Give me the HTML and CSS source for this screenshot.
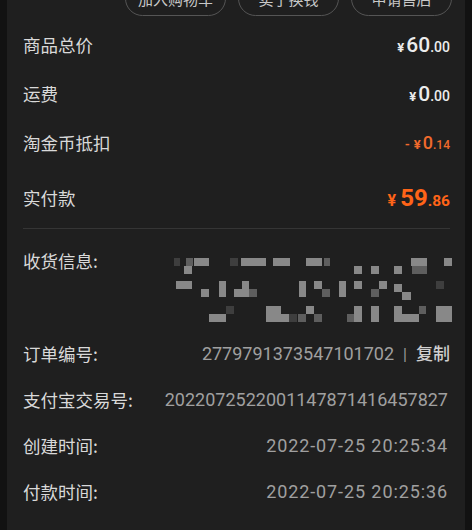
FILE: index.html
```html
<!DOCTYPE html>
<html lang="zh-CN">
<head>
<meta charset="utf-8">
<title>订单详情</title>
<link rel="stylesheet" href="styles.css">
</head>
<body>
<div class="frame">
  <div class="card">
    <div class="actions">
      <button class="pill">加入购物车</button>
      <button class="pill">卖了换钱</button>
      <button class="pill">申请售后</button>
    </div>

    <div class="row">
      <span class="label">商品总价</span>
      <span class="price"><span class="cur">¥</span><span class="int">60</span><span class="dec">.00</span></span>
    </div>
    <div class="row">
      <span class="label">运费</span>
      <span class="price"><span class="cur">¥</span><span class="int">0</span><span class="dec">.00</span></span>
    </div>
    <div class="row">
      <span class="label">淘金币抵扣</span>
      <span class="price discount"><span class="minus">-</span><span class="cur">¥</span><span class="int">0</span><span class="dec">.14</span></span>
    </div>
    <div class="row row-total">
      <span class="label">实付款</span>
      <span class="price total"><span class="cur">¥</span><span class="int">59</span><span class="dec">.86</span></span>
    </div>

    <div class="divider"></div>

    <div class="address">
      <span class="label">收货信息:</span>
      <svg class="mosaic" width="280" height="72" viewBox="0 0 280 72" aria-hidden="true">
        <g fill="#888888">
          <rect x="20" y="4" width="15" height="8"/>
          <rect x="67" y="4" width="25" height="8"/>
          <rect x="99" y="4" width="17" height="8"/>
          <rect x="132" y="4" width="16" height="8"/>
          <rect x="237" y="4" width="16" height="8"/>
          <rect x="270" y="4" width="8" height="8"/>
          <rect x="10" y="12" width="8" height="8"/>
          <rect x="180" y="12" width="8" height="8"/>
          <rect x="197" y="12" width="8" height="8"/>
          <rect x="220" y="12" width="8" height="8"/>
          <rect x="2" y="27" width="16" height="8"/>
          <rect x="45" y="27" width="7" height="16"/>
          <rect x="68" y="27" width="7" height="8"/>
          <rect x="125" y="27" width="7" height="16"/>
          <rect x="140" y="27" width="8" height="8"/>
          <rect x="165" y="27" width="7" height="16"/>
          <rect x="180" y="27" width="8" height="8"/>
          <rect x="205" y="27" width="8" height="8"/>
          <rect x="220" y="30" width="8" height="8"/>
          <rect x="27" y="35" width="8" height="8"/>
          <rect x="60" y="35" width="15" height="8"/>
          <rect x="228" y="38" width="9" height="8"/>
          <rect x="92" y="52" width="15" height="8"/>
          <rect x="92" y="60" width="23" height="8"/>
          <rect x="132" y="52" width="8" height="8"/>
          <rect x="180" y="52" width="8" height="16"/>
          <rect x="197" y="52" width="8" height="16"/>
          <rect x="220" y="52" width="8" height="16"/>
          <rect x="228" y="60" width="17" height="8"/>
          <rect x="262" y="52" width="16" height="16"/>
          <rect x="35" y="60" width="17" height="8"/>
        </g>
        <g fill="#5e5e5e">
          <rect x="12" y="4" width="7" height="8"/>
          <rect x="150" y="4" width="6" height="8"/>
          <rect x="238" y="12" width="15" height="8"/>
          <rect x="197" y="35" width="8" height="8"/>
          <rect x="148" y="35" width="8" height="8"/>
          <rect x="124" y="60" width="8" height="8"/>
          <rect x="140" y="60" width="8" height="8"/>
          <rect x="173" y="60" width="7" height="8"/>
          <rect x="245" y="52" width="7" height="8"/>
          <rect x="75" y="35" width="8" height="8"/>
        </g>
        <g fill="#3e3e3e">
          <rect x="0" y="4" width="6" height="8"/>
          <rect x="56" y="4" width="8" height="8"/>
          <rect x="262" y="27" width="8" height="8"/>
          <rect x="115" y="60" width="8" height="8"/>
          <rect x="52" y="52" width="8" height="8"/>
        </g>
      </svg>
    </div>

    <div class="info">
      <span class="label">订单编号:</span>
      <span class="value">2779791373547101702<span class="sep">|</span><span class="copy">复制</span></span>
    </div>
    <div class="info">
      <span class="label">支付宝交易号:</span>
      <span class="value">2022072522001147871416457827</span>
    </div>
    <div class="info">
      <span class="label">创建时间:</span>
      <span class="value time">2022-07-25 20:25:34</span>
    </div>
    <div class="info">
      <span class="label">付款时间:</span>
      <span class="value time">2022-07-25 20:25:36</span>
    </div>
    <div class="info">
      <span class="label">发货时间:</span>
      <span class="value time">2022-07-26 07:40:28</span>
    </div>
  </div>
</div>
</body>
</html>
```

FILE: styles.css
```css
* { box-sizing: border-box; }

html, body {
  margin: 0;
  padding: 0;
  background: #121212;
  height: 100%;
  overflow: hidden;
}

body {
  font-family: "Noto Sans CJK SC", "Noto Sans", sans-serif;
}

.frame {
  padding: 0 7px;
  height: 100%;
}

.card {
  background: #1f1f1f;
  height: 100%;
  padding: 0 15px 0 16px;
  display: flex;
  flex-direction: column;
}

.actions {
  height: 16px;
  flex: none;
  display: flex;
  justify-content: flex-end;
  align-items: flex-end;
  gap: 12px;
  margin-right: -2px;
  overflow: hidden;
}

.pill {
  flex: none;
  width: 101px;
  height: 35px;
  border: 1px solid #555555;
  border-radius: 18px;
  background: transparent;
  color: #c8c8c8;
  font-family: "Noto Sans CJK SC", sans-serif;
  font-size: 15px;
  line-height: 33px;
  padding: 0;
}

.row {
  flex: none;
  height: 49px;
  display: flex;
  align-items: center;
  justify-content: space-between;
}

.actions + .row { margin-top: 4.5px; }

.row-total { height: 60px; }

.label {
  color: #d9d9d9;
  font-size: 17.5px;
  font-weight: 400;
  line-height: 24px;
}

.price {
  font-family: "Roboto", "Liberation Sans", sans-serif;
  color: #ececec;
  font-weight: 500;
  display: flex;
  align-items: baseline;
  line-height: 1;
}

.price .cur {
  font-size: 13px;
  font-weight: 700;
  margin-right: 2px;
}

.price .int {
  font-size: 21px;
}

.price .dec {
  font-size: 14px;
}

.discount { color: #f06a2c; }
.discount .minus { font-size: 13px; margin-right: 4px; font-weight: 700; }
.discount .int { font-size: 18px; }
.discount .dec { font-size: 12px; }

.total { color: #ff6418; }
.total .cur { font-size: 16px; margin-right: 4px; }
.total .int { font-size: 24px; font-weight: 700; }
.total .dec { font-size: 15.5px; font-weight: 700; }

.divider {
  flex: none;
  height: 1px;
  background: #353535;
}

.address {
  flex: none;
  height: 102px;
  display: flex;
  justify-content: space-between;
  align-items: flex-start;
  padding-top: 20px;
}

.mosaic {
  display: block;
  margin-top: 5px;
  margin-right: -4px;
  filter: blur(0.7px);
}

.info {
  flex: none;
  height: 46px;
  display: flex;
  align-items: center;
  justify-content: space-between;
}

.value {
  font-family: "Roboto", "Liberation Sans", sans-serif;
  color: #a0a0a0;
  font-size: 18px;
  line-height: 24px;
  margin-right: 2px;
  white-space: nowrap;
}

.time {
  letter-spacing: 0.9px;
}

.sep {
  color: #9a9a9a;
  margin: 0 9px 0 9px;
  font-size: 16px;
}

.copy {
  font-family: "Noto Sans CJK SC", sans-serif;
  color: #d0d0d0;
  font-size: 17px;
  font-weight: 500;
  margin-right: -2px;
}
```
